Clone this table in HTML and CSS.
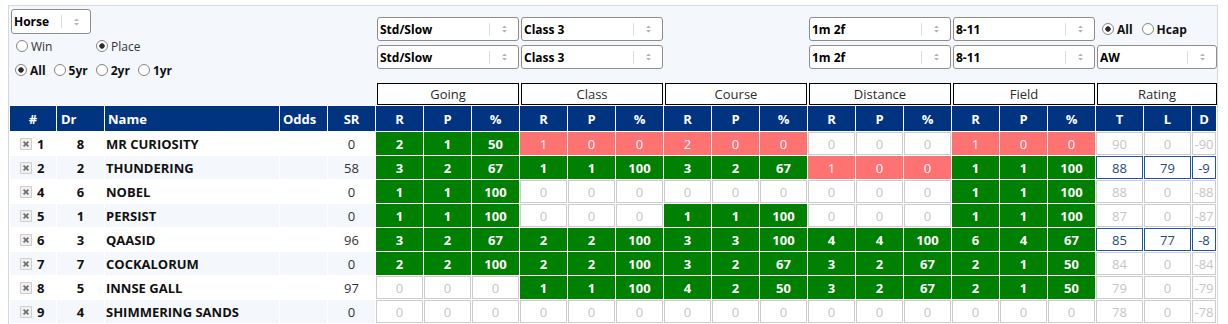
FILE: index.html
```html
<!DOCTYPE html>
<html lang="en">
<head>
<meta charset="utf-8">
<title>Form</title>
<link rel="stylesheet" href="styles.css">
</head>
<body>
<div class="panel">
  <div class="top">
    <div class="left">
      <div class="sel horse">
        <select><option>Horse</option></select>
        <span class="sep"></span>
        <span class="arr"><svg width="7" height="10" viewBox="0 0 7 10"><path d="M1 4 L3.5 1.5 L6 4 Z M1 6 L3.5 8.5 L6 6 Z" fill="#b4b4b4"/></svg></span>
      </div>
      <div class="r1">
        <label class="opt win"><input class="rad" type="radio" name="wp">Win</label>
        <label class="opt"><input class="rad" type="radio" name="wp" checked>Place</label>
      </div>
      <div class="r2">
        <label class="opt b"><input class="rad" type="radio" name="yr" checked>All</label>
        <label class="opt b"><input class="rad" type="radio" name="yr">5yr</label>
        <label class="opt b"><input class="rad" type="radio" name="yr">2yr</label>
        <label class="opt b"><input class="rad" type="radio" name="yr">1yr</label>
      </div>
    </div>
    <div class="filters">
      <div class="sel"><select><option>Std/Slow</option></select><span class="sep"></span><span class="arr"><svg width="7" height="10" viewBox="0 0 7 10"><path d="M1 4 L3.5 1.5 L6 4 Z M1 6 L3.5 8.5 L6 6 Z" fill="#b4b4b4"/></svg></span></div>
      <div class="sel"><select><option>Class 3</option></select><span class="sep"></span><span class="arr"><svg width="7" height="10" viewBox="0 0 7 10"><path d="M1 4 L3.5 1.5 L6 4 Z M1 6 L3.5 8.5 L6 6 Z" fill="#b4b4b4"/></svg></span></div>
      <div></div>
      <div class="sel"><select><option>1m 2f</option></select><span class="sep"></span><span class="arr"><svg width="7" height="10" viewBox="0 0 7 10"><path d="M1 4 L3.5 1.5 L6 4 Z M1 6 L3.5 8.5 L6 6 Z" fill="#b4b4b4"/></svg></span></div>
      <div class="sel"><select><option>8-11</option></select><span class="sep"></span><span class="arr"><svg width="7" height="10" viewBox="0 0 7 10"><path d="M1 4 L3.5 1.5 L6 4 Z M1 6 L3.5 8.5 L6 6 Z" fill="#b4b4b4"/></svg></span></div>
      <div class="rr">
        <label class="opt b"><input class="rad" type="radio" name="hc" checked>All</label>
        <label class="opt b"><input class="rad" type="radio" name="hc">Hcap</label>
      </div>
      <div class="sel"><select><option>Std/Slow</option></select><span class="sep"></span><span class="arr"><svg width="7" height="10" viewBox="0 0 7 10"><path d="M1 4 L3.5 1.5 L6 4 Z M1 6 L3.5 8.5 L6 6 Z" fill="#b4b4b4"/></svg></span></div>
      <div class="sel"><select><option>Class 3</option></select><span class="sep"></span><span class="arr"><svg width="7" height="10" viewBox="0 0 7 10"><path d="M1 4 L3.5 1.5 L6 4 Z M1 6 L3.5 8.5 L6 6 Z" fill="#b4b4b4"/></svg></span></div>
      <div></div>
      <div class="sel"><select><option>1m 2f</option></select><span class="sep"></span><span class="arr"><svg width="7" height="10" viewBox="0 0 7 10"><path d="M1 4 L3.5 1.5 L6 4 Z M1 6 L3.5 8.5 L6 6 Z" fill="#b4b4b4"/></svg></span></div>
      <div class="sel"><select><option>8-11</option></select><span class="sep"></span><span class="arr"><svg width="7" height="10" viewBox="0 0 7 10"><path d="M1 4 L3.5 1.5 L6 4 Z M1 6 L3.5 8.5 L6 6 Z" fill="#b4b4b4"/></svg></span></div>
      <div class="sel"><select><option>AW</option></select><span class="sep"></span><span class="arr"><svg width="7" height="10" viewBox="0 0 7 10"><path d="M1 4 L3.5 1.5 L6 4 Z M1 6 L3.5 8.5 L6 6 Z" fill="#b4b4b4"/></svg></span></div>
    </div>
  </div>

  <div class="groups">
    <div class="grp">Going</div>
    <div class="grp">Class</div>
    <div class="grp">Course</div>
    <div class="grp">Distance</div>
    <div class="grp">Field</div>
    <div class="grp rating">Rating</div>
  </div>

  <div class="tbl">
    <div class="row head">
      <div class="h c">#</div><div class="h lt drh">Dr</div><div class="h lt">Name</div><div class="h lt">Odds</div><div class="h c">SR</div>
      <div class="h c">R</div><div class="h c">P</div><div class="h c">%</div>
      <div class="h c">R</div><div class="h c">P</div><div class="h c">%</div>
      <div class="h c">R</div><div class="h c">P</div><div class="h c">%</div>
      <div class="h c">R</div><div class="h c">P</div><div class="h c">%</div>
      <div class="h c">R</div><div class="h c">P</div><div class="h c">%</div>
      <div class="h c">T</div><div class="h c">L</div><div class="h c">D</div>
    </div>

    <div class="row">
      <div class="l num"><svg class="xb" width="12" height="12" viewBox="0 0 12 12"><rect x="0.5" y="0.5" width="11" height="11" fill="#f0f0f0" stroke="#cfcfcf"/><path d="M3.6 3.6l4.8 4.8M8.4 3.6l-4.8 4.8" stroke="#6e6e6e" stroke-width="1.7"/></svg>1</div>
      <div class="l dr">8</div><div class="l name">MR CURIOSITY</div><div class="l"></div><div class="l sr">0</div>
      <div class="s g">2</div><div class="s g">1</div><div class="s g">50</div>
      <div class="s r">1</div><div class="s r">0</div><div class="s r">0</div>
      <div class="s r">2</div><div class="s r">0</div><div class="s r">0</div>
      <div class="s z">0</div><div class="s z">0</div><div class="s z">0</div>
      <div class="s r">1</div><div class="s r">0</div><div class="s r">0</div>
      <div class="s z">90</div><div class="s z">0</div><div class="s z">-90</div>
    </div>

    <div class="row alt">
      <div class="l num"><svg class="xb" width="12" height="12" viewBox="0 0 12 12"><rect x="0.5" y="0.5" width="11" height="11" fill="#f0f0f0" stroke="#cfcfcf"/><path d="M3.6 3.6l4.8 4.8M8.4 3.6l-4.8 4.8" stroke="#6e6e6e" stroke-width="1.7"/></svg>2</div>
      <div class="l dr">2</div><div class="l name">THUNDERING</div><div class="l"></div><div class="l sr">58</div>
      <div class="s g">3</div><div class="s g">2</div><div class="s g">67</div>
      <div class="s g">1</div><div class="s g">1</div><div class="s g">100</div>
      <div class="s g">3</div><div class="s g">2</div><div class="s g">67</div>
      <div class="s r">1</div><div class="s r">0</div><div class="s r">0</div>
      <div class="s g">1</div><div class="s g">1</div><div class="s g">100</div>
      <div class="s hl">88</div><div class="s hl">79</div><div class="s hl">-9</div>
    </div>

    <div class="row">
      <div class="l num"><svg class="xb" width="12" height="12" viewBox="0 0 12 12"><rect x="0.5" y="0.5" width="11" height="11" fill="#f0f0f0" stroke="#cfcfcf"/><path d="M3.6 3.6l4.8 4.8M8.4 3.6l-4.8 4.8" stroke="#6e6e6e" stroke-width="1.7"/></svg>4</div>
      <div class="l dr">6</div><div class="l name">NOBEL</div><div class="l"></div><div class="l sr">0</div>
      <div class="s g">1</div><div class="s g">1</div><div class="s g">100</div>
      <div class="s z">0</div><div class="s z">0</div><div class="s z">0</div>
      <div class="s z">0</div><div class="s z">0</div><div class="s z">0</div>
      <div class="s z">0</div><div class="s z">0</div><div class="s z">0</div>
      <div class="s g">1</div><div class="s g">1</div><div class="s g">100</div>
      <div class="s z">88</div><div class="s z">0</div><div class="s z">-88</div>
    </div>

    <div class="row alt">
      <div class="l num"><svg class="xb" width="12" height="12" viewBox="0 0 12 12"><rect x="0.5" y="0.5" width="11" height="11" fill="#f0f0f0" stroke="#cfcfcf"/><path d="M3.6 3.6l4.8 4.8M8.4 3.6l-4.8 4.8" stroke="#6e6e6e" stroke-width="1.7"/></svg>5</div>
      <div class="l dr">1</div><div class="l name">PERSIST</div><div class="l"></div><div class="l sr">0</div>
      <div class="s g">1</div><div class="s g">1</div><div class="s g">100</div>
      <div class="s z">0</div><div class="s z">0</div><div class="s z">0</div>
      <div class="s g">1</div><div class="s g">1</div><div class="s g">100</div>
      <div class="s z">0</div><div class="s z">0</div><div class="s z">0</div>
      <div class="s g">1</div><div class="s g">1</div><div class="s g">100</div>
      <div class="s z">87</div><div class="s z">0</div><div class="s z">-87</div>
    </div>

    <div class="row">
      <div class="l num"><svg class="xb" width="12" height="12" viewBox="0 0 12 12"><rect x="0.5" y="0.5" width="11" height="11" fill="#f0f0f0" stroke="#cfcfcf"/><path d="M3.6 3.6l4.8 4.8M8.4 3.6l-4.8 4.8" stroke="#6e6e6e" stroke-width="1.7"/></svg>6</div>
      <div class="l dr">3</div><div class="l name">QAASID</div><div class="l"></div><div class="l sr">96</div>
      <div class="s g">3</div><div class="s g">2</div><div class="s g">67</div>
      <div class="s g">2</div><div class="s g">2</div><div class="s g">100</div>
      <div class="s g">3</div><div class="s g">3</div><div class="s g">100</div>
      <div class="s g">4</div><div class="s g">4</div><div class="s g">100</div>
      <div class="s g">6</div><div class="s g">4</div><div class="s g">67</div>
      <div class="s hl">85</div><div class="s hl">77</div><div class="s hl">-8</div>
    </div>

    <div class="row alt">
      <div class="l num"><svg class="xb" width="12" height="12" viewBox="0 0 12 12"><rect x="0.5" y="0.5" width="11" height="11" fill="#f0f0f0" stroke="#cfcfcf"/><path d="M3.6 3.6l4.8 4.8M8.4 3.6l-4.8 4.8" stroke="#6e6e6e" stroke-width="1.7"/></svg>7</div>
      <div class="l dr">7</div><div class="l name">COCKALORUM</div><div class="l"></div><div class="l sr">0</div>
      <div class="s g">2</div><div class="s g">2</div><div class="s g">100</div>
      <div class="s g">2</div><div class="s g">2</div><div class="s g">100</div>
      <div class="s g">3</div><div class="s g">2</div><div class="s g">67</div>
      <div class="s g">3</div><div class="s g">2</div><div class="s g">67</div>
      <div class="s g">2</div><div class="s g">1</div><div class="s g">50</div>
      <div class="s z">84</div><div class="s z">0</div><div class="s z">-84</div>
    </div>

    <div class="row">
      <div class="l num"><svg class="xb" width="12" height="12" viewBox="0 0 12 12"><rect x="0.5" y="0.5" width="11" height="11" fill="#f0f0f0" stroke="#cfcfcf"/><path d="M3.6 3.6l4.8 4.8M8.4 3.6l-4.8 4.8" stroke="#6e6e6e" stroke-width="1.7"/></svg>8</div>
      <div class="l dr">5</div><div class="l name">INNSE GALL</div><div class="l"></div><div class="l sr">97</div>
      <div class="s z">0</div><div class="s z">0</div><div class="s z">0</div>
      <div class="s g">1</div><div class="s g">1</div><div class="s g">100</div>
      <div class="s g">4</div><div class="s g">2</div><div class="s g">50</div>
      <div class="s g">3</div><div class="s g">2</div><div class="s g">67</div>
      <div class="s g">2</div><div class="s g">1</div><div class="s g">50</div>
      <div class="s z">79</div><div class="s z">0</div><div class="s z">-79</div>
    </div>

    <div class="row alt">
      <div class="l num"><svg class="xb" width="12" height="12" viewBox="0 0 12 12"><rect x="0.5" y="0.5" width="11" height="11" fill="#f0f0f0" stroke="#cfcfcf"/><path d="M3.6 3.6l4.8 4.8M8.4 3.6l-4.8 4.8" stroke="#6e6e6e" stroke-width="1.7"/></svg>9</div>
      <div class="l dr">4</div><div class="l name">SHIMMERING SANDS</div><div class="l"></div><div class="l sr">0</div>
      <div class="s z">0</div><div class="s z">0</div><div class="s z">0</div>
      <div class="s z">0</div><div class="s z">0</div><div class="s z">0</div>
      <div class="s z">0</div><div class="s z">0</div><div class="s z">0</div>
      <div class="s z">0</div><div class="s z">0</div><div class="s z">0</div>
      <div class="s z">0</div><div class="s z">0</div><div class="s z">0</div>
      <div class="s z">78</div><div class="s z">0</div><div class="s z">-78</div>
    </div>
  </div>
</div>
</body>
</html>
```

FILE: styles.css
```css
* { box-sizing: border-box; }

body {
  margin: 0;
  background: #ffffff;
  font-family: "Open Sans", "Noto Sans", sans-serif;
  font-size: 13px;
  color: #222;
}

.panel {
  margin: 5px 0 0 8px;
  width: 1210px;
  border: 1px solid #d3d8df;
  background: #f4f7fc;
}

/* ---------- top controls ---------- */
.top {
  display: flex;
  height: 77px;
}

.left {
  width: 368px;
  flex: none;
}

.sel {
  display: flex;
  align-items: center;
  height: 24px;
  border: 1px solid #8e8e8e;
  border-radius: 3px;
  background: #fff;
}

.sel select {
  flex: 1;
  min-width: 0;
  height: 100%;
  appearance: none;
  -webkit-appearance: none;
  border: none;
  background: transparent;
  font-family: inherit;
  font-size: 12px;
  font-weight: 700;
  color: #000;
  padding: 0 0 0 2px;
  margin: 0;
  outline: none;
}

.sel .sep {
  width: 1px;
  height: 13px;
  background: #dcdcdc;
  flex: none;
}

.sel .arr {
  width: 28px;
  flex: none;
  display: flex;
  justify-content: center;
  align-items: center;
}

.horse {
  width: 80px;
  height: 25px;
  margin: 3px 0 0 2px;
}

.r1, .r2 {
  height: 24px;
  display: flex;
  align-items: center;
}

.r1 { padding-left: 7px; }
.r1 .win { width: 80px; }

.r2 {
  padding-left: 6px;
  gap: 8px;
}

.opt {
  display: inline-flex;
  align-items: center;
  gap: 3px;
  font-size: 12px;
  color: #333;
}

.opt.b {
  font-weight: 700;
  color: #111;
}

.rad {
  appearance: none;
  -webkit-appearance: none;
  width: 12px;
  height: 12px;
  margin: 0;
  border: 1px solid #858585;
  border-radius: 50%;
  background: #fff;
  flex: none;
}

.rad:checked {
  background: radial-gradient(circle, #2c2c2c 0 2.4px, #fff 3px);
}

.filters {
  display: grid;
  grid-template-columns: repeat(5, 142px) 120px;
  grid-auto-rows: 24px;
  column-gap: 2px;
  row-gap: 4px;
  padding-top: 11px;
}

.rr {
  display: flex;
  align-items: center;
  gap: 9px;
  padding-left: 5px;
}

/* ---------- group labels ---------- */
.groups {
  display: flex;
  gap: 2px;
  padding-left: 368px;
  height: 22px;
}

.grp {
  width: 142px;
  border: 1px solid #000;
  background: #fff;
  text-align: center;
  line-height: 20px;
  font-size: 13px;
  color: #2b2b2b;
}

.grp.rating { width: 120px; }

/* ---------- table ---------- */
.tbl {
  display: grid;
  grid-template-columns: 46px 47px 174px 47px 47px repeat(17, 47px) 24px;
  grid-template-rows: 25px;
  grid-auto-rows: 23px;
  gap: 1px;
  padding: 1px;
  background: #fff;
}

.row { display: contents; }

.h {
  background: #003380;
  color: #fff;
  font-weight: 700;
  display: flex;
  align-items: center;
}

.h.c { justify-content: center; }
.h.lt { padding-left: 3px; }
.h.drh { padding-left: 4px; }

.l {
  background: #fff;
  display: flex;
  align-items: center;
  color: #111;
}

.row.alt .l { background: #f4f7fc; }

.num {
  padding-left: 10px;
  gap: 5px;
  font-weight: 700;
}

.xb { flex: none; }

.dr {
  justify-content: center;
  font-weight: 700;
}

.name {
  padding-left: 1px;
  font-weight: 700;
  white-space: nowrap;
}

.sr {
  justify-content: center;
  color: #333;
}

.s {
  display: flex;
  align-items: center;
  justify-content: center;
  border: 1px solid transparent;
  white-space: nowrap;
  overflow: hidden;
}

.s.g {
  background: #008000;
  border-color: #008000;
  color: #fff;
  font-weight: 700;
}

.s.r {
  background: #ff7272;
  border-color: #ff7272;
  color: #fff;
}

.s.z {
  background: #fff;
  border-color: #cccccc;
  color: #c6c6c6;
}

.s.hl {
  background: #fff;
  border-color: #1c57a0;
  color: #26497a;
}
```
